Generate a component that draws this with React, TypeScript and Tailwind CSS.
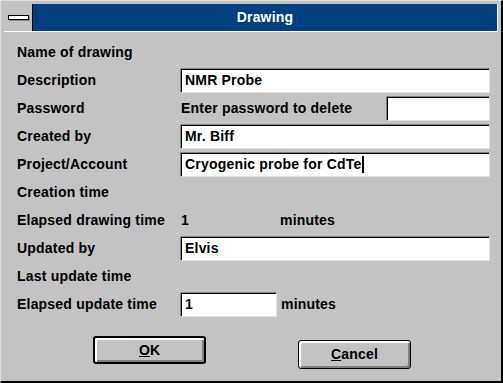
import React from "react";

const font = { fontFamily: '"Liberation Sans", Arial, sans-serif' };

function Box({ children, w, cursor }: { children?: React.ReactNode; w: string; cursor?: boolean }) {
  return (
    <div
      className={`${w} h-[25px] bg-white border border-t-[#808080] border-l-[#808080] border-b-[#dfdfdf] border-r-[#dfdfdf] shadow-[inset_1px_1px_0_#000] flex items-center pl-[4px] pt-[1px] text-[14px] font-bold tracking-[0.2px] text-black whitespace-nowrap`}
    >
      {children}
      {cursor && <span className="inline-block w-[2px] h-[17px] bg-black ml-[1px]" />}
    </div>
  );
}

function Row({ label, children }: { label: string; children?: React.ReactNode }) {
  return (
    <div className="h-[28px] flex items-center">
      <div className="w-[163px] text-[14px] font-bold tracking-[0.2px] text-black whitespace-nowrap">{label}</div>
      {children}
    </div>
  );
}

export default function App() {
  return (
    <div
      className="w-[503px] h-[383px] bg-[#c3c3c3] border-t border-l border-t-[#dfdfdf] border-l-[#dfdfdf] border-b-2 border-r-2 border-b-[#000] border-r-[#000] flex flex-col overflow-hidden"
      style={font}
    >
      {/* Title bar */}
      <div className="mx-[3px] mt-[3px] h-[28px] flex border-b border-r border-white shrink-0">
        <div className="w-[29px] h-full bg-[#c3c3c3] border-r border-black flex items-center justify-center">
          <span className="block w-[21px] h-[5px] bg-white border border-black shadow-[1px_1px_0_#808080] ml-[1px]" />
        </div>
        <div className="flex-1 h-full bg-[#00407f] flex items-center justify-center text-white text-[14px] font-bold tracking-[0.2px]">
          Drawing
        </div>
      </div>

      {/* Body */}
      <div className="pl-[16px] pt-[6px] flex flex-col">
        <Row label="Name of drawing" />
        <Row label="Description">
          <Box w="w-[310px]">NMR Probe</Box>
        </Row>
        <Row label="Password">
          <div className="w-[310px] flex items-center">
            <span className="text-[14px] font-bold tracking-[0.2px] pl-[1px] whitespace-nowrap">Enter password to delete</span>
            <div className="ml-auto">
              <Box w="w-[104px]" />
            </div>
          </div>
        </Row>
        <Row label="Created by">
          <Box w="w-[310px]">Mr. Biff</Box>
        </Row>
        <Row label="Project/Account">
          <Box w="w-[310px]" cursor>Cryogenic probe for CdTe</Box>
        </Row>
        <Row label="Creation time" />
        <Row label="Elapsed drawing time">
          <span className="w-[100px] text-[14px] font-bold pl-[1px]">1</span>
          <span className="text-[14px] font-bold tracking-[0.2px]">minutes</span>
        </Row>
        <Row label="Updated by">
          <Box w="w-[310px]">Elvis</Box>
        </Row>
        <Row label="Last update time" />
        <Row label="Elapsed update time">
          <Box w="w-[97px]">1</Box>
          <span className="ml-[4px] text-[14px] font-bold tracking-[0.2px]">minutes</span>
        </Row>
      </div>

      {/* Buttons */}
      <div className="flex items-start pl-[92px] mt-[18px]">
        <button className="w-[113px] h-[28px] border-2 border-black rounded-[3px] bg-[#c3c3c3] shadow-[inset_2px_2px_0_#fff,inset_-2px_-2px_0_#808080] text-[14px] font-bold text-black flex items-center justify-center">
          <span><span className="underline">O</span>K</span>
        </button>
        <button className="ml-[92px] mt-[4px] w-[113px] h-[29px] border border-black rounded-[3px] bg-[#c3c3c3] shadow-[inset_2px_2px_0_#fff,inset_-2px_-2px_0_#808080] text-[14px] font-bold tracking-[0.2px] text-black flex items-center justify-center">
          <span><span className="underline">C</span>ancel</span>
        </button>
      </div>
    </div>
  );
}
